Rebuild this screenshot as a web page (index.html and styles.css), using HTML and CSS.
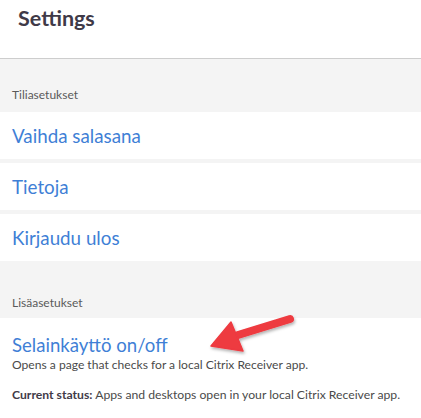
FILE: index.html
```html
<!DOCTYPE html>
<html>
<head>
<meta charset="utf-8">
<link rel="stylesheet" href="styles.css">
</head>
<body>
<div class="page">
  <header class="header"><h1 class="title">Settings</h1></header>
  <div class="group-label">Tiliasetukset</div>
  <div class="rows">
    <a class="row">Vaihda salasana</a>
    <a class="row">Tietoja</a>
    <a class="row">Kirjaudu ulos</a>
  </div>
  <div class="group-label group-label--second">Lisäasetukset</div>
  <div class="option">
    <a class="option-title">Selainkäyttö on/off</a>
    <p class="option-desc">Opens a page that checks for a local Citrix Receiver app.</p>
    <p class="option-status"><b>Current status:</b> Apps and desktops open in your local Citrix Receiver app.</p>
    <svg class="arrow" width="100" height="50" viewBox="0 0 100 50">
      <defs>
        <filter id="sh" x="-20%" y="-40%" width="140%" height="180%">
          <feDropShadow dx="1" dy="2" stdDeviation="1.5" flood-color="#000" flood-opacity="0.3"/>
        </filter>
      </defs>
      <g filter="url(#sh)" fill="#ee3a40" stroke="#ee3a40">
        <line x1="82" y1="9" x2="30" y2="25" stroke-width="8" stroke-linecap="round"/>
        <polygon points="3,36 23,12 35,41" stroke-width="1.5" stroke-linejoin="round"/>
      </g>
    </svg>
  </div>
</div>
</body>
</html>
```
FILE: styles.css
```css
html, body {
  margin: 0;
  padding: 0;
  background: #ffffff;
}
body {
  font-family: Lato, "Noto Sans", sans-serif;
  width: 421px;
  height: 418px;
  overflow: hidden;
}
.header {
  height: 58px;
  border-bottom: 1px solid #cdcdcd;
  display: flex;
  align-items: flex-start;
}
.title {
  margin: 2px 0 0 18px;
  font-size: 21.5px;
  font-weight: 700;
  color: #3f3a48;
  line-height: 32px;
}
.group-label {
  background: #f4f4f4;
  height: 53px;
  box-sizing: border-box;
  padding: 28px 0 0 12px;
  font-size: 12px;
  color: #5a5a5a;
  line-height: 16px;
}
.group-label--second {
  height: 57px;
  padding-top: 34px;
}
.rows {
  background: #f4f4f4;
  display: flex;
  flex-direction: column;
  gap: 4px;
}
.row {
  background: #ffffff;
  height: 47px;
  display: flex;
  align-items: center;
  padding-left: 12px;
  font-size: 18.8px;
  color: #3f7fd6;
  cursor: pointer;
}
.option {
  position: relative;
  padding: 14px 12px 0 12px;
}
.option-title {
  display: block;
  font-size: 18.6px;
  color: #3f7fd6;
  line-height: 26px;
}
.option-desc {
  margin: -2px 0 0 0;
  font-size: 12.1px;
  color: #4a4a4a;
  line-height: 17px;
}
.option-status {
  margin: 13px 0 0 0;
  font-size: 12.2px;
  color: #4a4a4a;
  line-height: 17px;
  white-space: nowrap;
}
.option-status b {
  color: #3f3a48;
  font-weight: 700;
}
.arrow {
  position: absolute;
  left: 208px;
  top: -8px;
}
```
